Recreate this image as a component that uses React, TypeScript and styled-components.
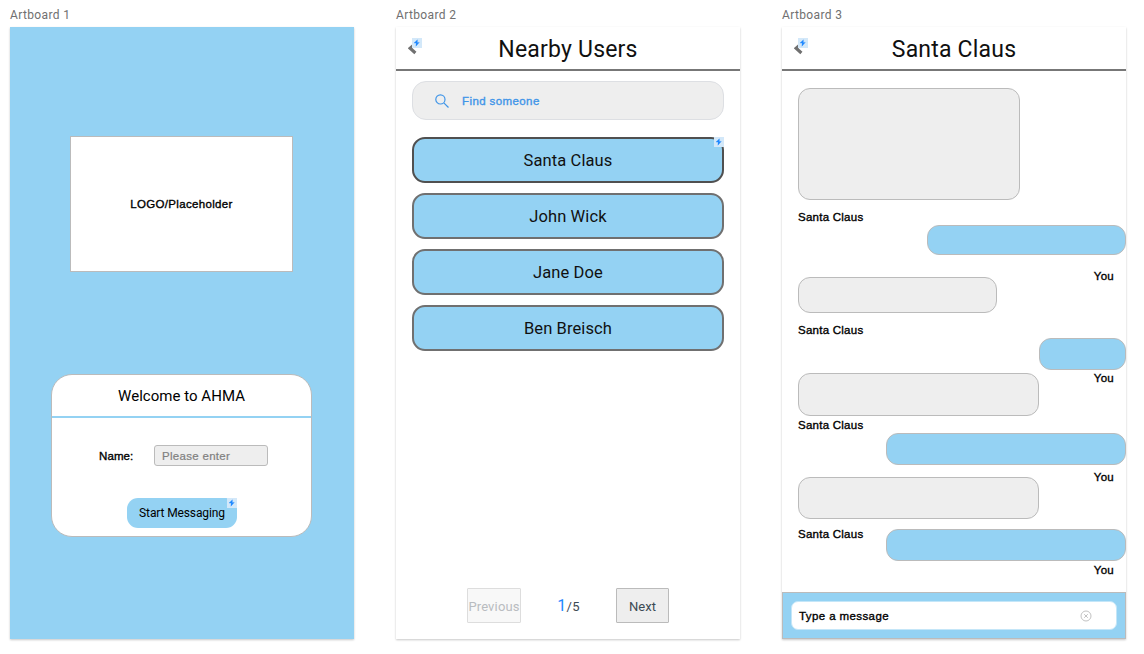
import React from "react";
import styled, { createGlobalStyle } from "styled-components";

const blue = "#94d2f3";
const grey = "#eeeeee";
const line = "#bbbbbb";

const GlobalStyle = createGlobalStyle`
  * { box-sizing: border-box; }
  body {
    margin: 0;
    background: #fff;
    color: #101010;
    font-family: Roboto, "Liberation Sans", sans-serif;
  }
`;

const Canvas = styled.main`
  display: flex;
  gap: 42px;
  width: 1144px;
  height: 654px;
  padding: 6px 0 0 10px;
  overflow: hidden;
`;

const BoardColumn = styled.section`
  width: 344px;
`;

const BoardName = styled.div`
  height: 21px;
  font-size: 12px;
  line-height: 18px;
  letter-spacing: 0.37px;
  color: #707070;
`;

const Board = styled.div<{ $fill?: string }>`
  display: flex;
  flex-direction: column;
  height: 612px;
  background: ${(p) => p.$fill ?? "#fff"};
  box-shadow: 0 1px 2px rgba(0, 0, 0, 0.22);
`;

const Label = styled.span<{ $spacing?: number }>`
  font-family: "Liberation Sans", sans-serif;
  font-size: 11.5px;
  font-weight: 400;
  line-height: 14px;
  letter-spacing: ${(p) => p.$spacing ?? 0.25}px;
  color: #000;
  -webkit-text-stroke: 0.35px currentColor;
  white-space: nowrap;
`;

const LogoBox = styled.div`
  display: flex;
  align-items: center;
  justify-content: center;
  width: 223px;
  height: 136px;
  margin: 109px 0 0 60px;
  background: #fff;
  border: 1px solid ${line};
`;

const WelcomeCard = styled.div`
  display: flex;
  flex-direction: column;
  width: 261px;
  height: 163px;
  margin: 102px 0 0 41px;
  background: #fff;
  border: 1px solid ${line};
  border-radius: 21px;
`;

const CardTitle = styled.h2`
  height: 43px;
  margin: 0;
  border-bottom: 2px solid ${blue};
  font-size: 15px;
  font-weight: 400;
  line-height: 42px;
  letter-spacing: 0.03px;
  text-align: center;
  color: #000;
`;

const NameRow = styled.div`
  display: flex;
  align-items: center;
  justify-content: space-between;
  width: 169px;
  margin: 27px 0 0 47px;
`;

const NameInput = styled.div`
  width: 114px;
  height: 21px;
  padding-left: 7px;
  background: ${grey};
  border: 1px solid ${line};
  border-radius: 3px;
  font-family: "Liberation Sans", sans-serif;
  font-size: 11.5px;
  line-height: 20px;
  letter-spacing: 0.3px;
  color: #808080;
  -webkit-text-stroke: 0.2px currentColor;
`;

const StartButton = styled.div`
  position: relative;
  width: 110px;
  height: 30px;
  margin: 32px 0 0 75px;
  background: ${blue};
  border-radius: 11px;
  font-size: 12px;
  line-height: 30px;
  letter-spacing: -0.12px;
  text-align: center;
  color: #000;
`;

const BadgeBox = styled.span<{ $top: number; $right: number }>`
  position: absolute;
  top: ${(p) => p.$top}px;
  right: ${(p) => p.$right}px;
  display: flex;
  width: 10px;
  height: 10px;
  background: #d3e8f9;
`;

const Header = styled.header`
  position: relative;
  display: flex;
  flex-shrink: 0;
  justify-content: center;
  height: 44px;
  border-bottom: 2px solid #777;
`;

const BackButton = styled.span`
  position: absolute;
  left: 12px;
  top: 11px;
  display: block;
  width: 14px;
  height: 18px;
`;

const Title = styled.h1`
  margin: 0;
  font-size: 23px;
  font-weight: 400;
  line-height: 45px;
  letter-spacing: 0.2px;
`;

const Search = styled.div`
  display: flex;
  flex-shrink: 0;
  align-items: center;
  gap: 13px;
  height: 39px;
  margin: 10px 16px 0;
  padding-left: 22px;
  background: ${grey};
  border: 1px solid #dddfe3;
  border-radius: 14px;
`;

const SearchText = styled(Label)`
  color: #3f95e8;
`;

const UserList = styled.div`
  display: flex;
  flex-direction: column;
  gap: 10px;
  margin: 17px 16px 0;
`;

const UserRow = styled.div<{ $active?: boolean }>`
  position: relative;
  height: 46px;
  background: ${blue};
  border: 2px solid ${(p) => (p.$active ? "#505050" : "#707070")};
  border-radius: 13px;
  font-size: 16.5px;
  line-height: 43px;
  letter-spacing: 0.1px;
  text-align: center;
`;

const Pager = styled.div`
  display: flex;
  align-items: center;
  height: 35px;
  margin: auto 0 16px 71px;
`;

const PageButton = styled.div<{ $disabled?: boolean }>`
  display: flex;
  align-items: center;
  justify-content: center;
  width: ${(p) => (p.$disabled ? 54 : 53)}px;
  height: 35px;
  padding-top: 2px;
  background: ${(p) => (p.$disabled ? "#f8f8f8" : grey)};
  border: 1px solid ${(p) => (p.$disabled ? "#dddddd" : line)};
  border-radius: 1px;
  font-size: 13px;
  letter-spacing: ${(p) => (p.$disabled ? 0.15 : 0)}px;
  color: ${(p) => (p.$disabled ? "#b9bcc0" : "#3c4a54")};
`;

const PageCount = styled.div`
  width: 95px;
  text-align: center;
  font-size: 13px;
  letter-spacing: 0.2px;
  color: #3c4a54;
`;

const CurrentPage = styled.span`
  font-size: 16px;
  color: #1e88ff;
`;

const Conversation = styled.div`
  display: grid;
  flex: 1;
  min-height: 0;
`;

const Speaker = styled.div<{ $own?: boolean }>`
  grid-area: 1 / 1;
  display: flex;
  flex-direction: column;
  align-items: ${(p) => (p.$own ? "flex-end" : "flex-start")};
  justify-self: ${(p) => (p.$own ? "end" : "start")};
  padding-left: ${(p) => (p.$own ? 0 : 16)}px;
`;

const Bubble = styled.div<{ $own?: boolean; $w: number; $h: number; $before: number }>`
  width: ${(p) => p.$w}px;
  height: ${(p) => p.$h}px;
  margin-top: ${(p) => p.$before}px;
  background: ${(p) => (p.$own ? blue : grey)};
  border: 1px solid ${line};
  border-radius: 12px;
`;

const Author = styled(Label)<{ $own?: boolean; $gap: number }>`
  display: block;
  margin-top: ${(p) => p.$gap}px;
  margin-right: ${(p) => (p.$own ? 12 : 0)}px;
`;

const Composer = styled.footer`
  height: 47px;
  padding: 8px;
  background: ${blue};
  border: 1px solid ${line};
`;

const MessageInput = styled.div`
  display: flex;
  align-items: center;
  justify-content: space-between;
  height: 29px;
  padding: 0 24px 0 7px;
  background: #fff;
  border: 1px solid #c4e6f8;
  border-radius: 7px;
`;

type Message = { w: number; h: number; before: number; gap: number };

const received: Message[] = [
  { w: 222, h: 112, before: 17, gap: 10 },
  { w: 199, h: 36, before: 53, gap: 10 },
  { w: 241, h: 43, before: 36, gap: 2 },
  { w: 241, h: 42, before: 45, gap: 8 },
];

const sent: Message[] = [
  { w: 199, h: 30, before: 154, gap: 14 },
  { w: 87, h: 32, before: 55, gap: 1 },
  { w: 240, h: 32, before: 48, gap: 5 },
  { w: 240, h: 32, before: 45, gap: 2 },
];

const Badge = ({ top = 0, right = 0 }: { top?: number; right?: number }) => (
  <BadgeBox $top={top} $right={right}>
    <svg width="10" height="10" viewBox="0 0 10 10">
      <path d="M5.4 1.8 2 5.1h2.1L3.9 8.2 7.3 4.4H5.3Z" fill="#1e88ff" stroke="#1e88ff" strokeWidth="0.3" />
    </svg>
  </BadgeBox>
);

const Back = () => (
  <BackButton>
    <svg width="10" height="18" viewBox="0 0 10 18">
      <path d="M7.4 5.6 2.1 10.3l5.3 4.7" fill="none" stroke="#707070" strokeWidth="3.2" />
    </svg>
    <Badge />
  </BackButton>
);

const Thread = ({ items, author, own }: { items: Message[]; author: string; own?: boolean }) => (
  <Speaker $own={own}>
    {items.map((m, i) => (
      <React.Fragment key={i}>
        <Bubble $own={own} $w={m.w} $h={m.h} $before={m.before} />
        <Author $own={own} $gap={m.gap}>{author}</Author>
      </React.Fragment>
    ))}
  </Speaker>
);

export default function App() {
  return (
    <>
      <GlobalStyle />
      <Canvas>
        <BoardColumn>
          <BoardName>Artboard 1</BoardName>
          <Board $fill={blue}>
            <LogoBox>
              <Label $spacing={0.33}>LOGO/Placeholder</Label>
            </LogoBox>
            <WelcomeCard>
              <CardTitle>Welcome to AHMA</CardTitle>
              <NameRow>
                <Label $spacing={0.1}>Name:</Label>
                <NameInput>Please enter</NameInput>
              </NameRow>
              <StartButton>
                Start Messaging
                <Badge />
              </StartButton>
            </WelcomeCard>
          </Board>
        </BoardColumn>

        <BoardColumn>
          <BoardName>Artboard 2</BoardName>
          <Board>
            <Header>
              <Back />
              <Title>Nearby Users</Title>
            </Header>
            <Search>
              <svg width="14" height="14" viewBox="0 0 14 14" fill="none" stroke="#3f95e8" strokeWidth="1.2">
                <circle cx="5.4" cy="5.4" r="4.6" />
                <path d="m8.8 8.8 4.7 4.7" />
              </svg>
              <SearchText $spacing={0.4}>Find someone</SearchText>
            </Search>
            <UserList>
              <UserRow $active>
                Santa Claus
                <Badge top={-2} right={-2} />
              </UserRow>
              <UserRow>John Wick</UserRow>
              <UserRow>Jane Doe</UserRow>
              <UserRow>Ben Breisch</UserRow>
            </UserList>
            <Pager>
              <PageButton $disabled>Previous</PageButton>
              <PageCount>
                <CurrentPage>1</CurrentPage>/5
              </PageCount>
              <PageButton>Next</PageButton>
            </Pager>
          </Board>
        </BoardColumn>

        <BoardColumn>
          <BoardName>Artboard 3</BoardName>
          <Board>
            <Header>
              <Back />
              <Title>Santa Claus</Title>
            </Header>
            <Conversation>
              <Thread items={received} author="Santa Claus" />
              <Thread items={sent} author="You" own />
            </Conversation>
            <Composer>
              <MessageInput>
                <Label $spacing={0.4}>Type a message</Label>
                <svg width="12" height="12" viewBox="0 0 12 12" fill="none" stroke="#bbb" strokeWidth="0.9">
                  <circle cx="6" cy="6" r="5" />
                  <path d="m4.2 4.2 3.6 3.6m0-3.6L4.2 7.8" />
                </svg>
              </MessageInput>
            </Composer>
          </Board>
        </BoardColumn>
      </Canvas>
    </>
  );
}
